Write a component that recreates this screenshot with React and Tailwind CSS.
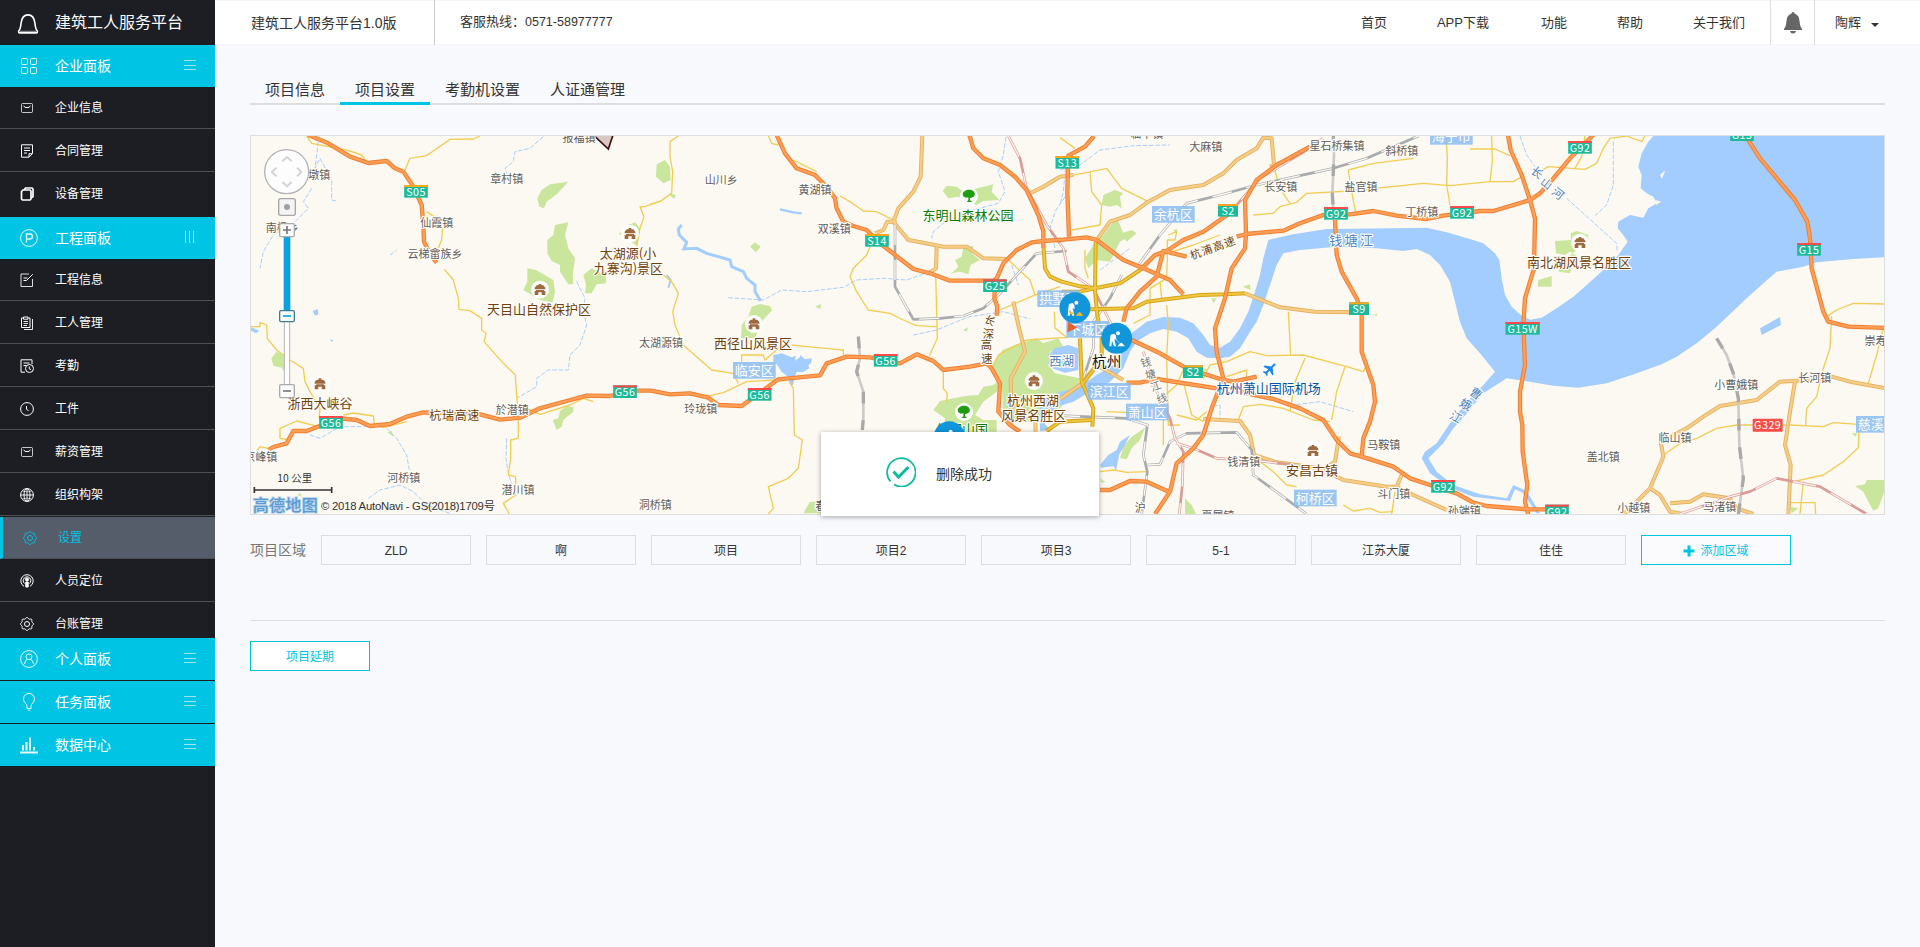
import React from "react";

const TILE = 1230;

const SHIELD = { G: "#fe4a4a", S: "#fda61c" };

/* Coordinates inside every tile are thirds of a pixel. */
const highways = [
  [0, "205,30 265,55 330,95 385,114 440,108 465,130 490,140 520,185 545,240 550,300 552,350 575,395 590,413"],
  [0, "85,975 100,966 140,955 160,918 200,918 300,880 350,885 390,903 450,897 500,875 550,862 720,868 780,884 840,878 900,850 980,828 1040,812 1110,813 1180,797 1232,797 1290,808 1350,805 1405,818 1435,840 1505,843 1550,810 1615,763 1740,751 1760,715 1820,695 1890,697 1980,715 2030,688 2080,708 2110,735 2190,725 2240,715 2255,730 2280,775 2275,860 2310,900 2340,920"],
  [1, "380,30 405,85 440,130 495,150 530,185 555,220 560,250 580,290 610,303 650,315 690,355 790,432 840,445 900,467 1030,467 1040,460 1060,415 1100,375 1145,352 1180,348 1240,344 1310,337 1340,345 1420,405 1480,430 1560,465 1600,508"],
  [1, "958,30 970,70 1000,100 1050,120 1095,155 1130,195 1165,270 1180,320 1180,370"],
  [1, "1035,480 1033,520 1042,545 1040,572"],
  [2, "102,33 75,65 25,92 22,200 27,335"],
  [2, "750,65 650,120 590,165 555,225 558,327 555,370 515,430 495,520 465,610 470,680 490,760 455,850 430,930 400,970 350,1015 330,1100 285,1167"],
  [2, "530,250 480,285 430,320 370,345 320,378 285,390 240,435"],
  [2, "380,395 310,378 290,455 240,500 200,550 190,590"],
  [2, "530,335 560,327 670,317 720,295 790,270 830,268 870,268 940,258 1010,272 1100,282 1150,272 1260,258 1300,258 1410,225 1440,205 1480,160 1530,100 1600,30"],
  [2, "825,285 830,390 845,440 890,520 905,560 905,680 940,780 945,830 930,890 910,940 905,995"],
  [2, "215,645 300,685 380,730 490,765 520,770 590,755"],
  [2, "200,773 240,773 290,762 470,790"],
  [2, "490,780 560,805 640,822 720,850 790,885 830,945 870,985 905,995 1000,1025 1050,1060 1110,1080 1190,1105 1240,1133 1280,1143 1400,1153 1490,1153"],
  [2, "120,1095 150,1095 210,1068 260,1070 330,1102"],
  [3, "114,30 122,75 155,150 180,225 195,280 192,430 165,520 160,600 165,720 150,800 150,860 157,900 158,980 172,1080 165,1130 175,1170"],
  [3, "825,30 870,100 975,225 1012,290 1020,340 1025,430 1060,560 1075,590 1135,605 1246,609"],
];

const mainRoads = [
  [1, "817,30 812,155 790,200 745,250 730,290 775,345 820,353 880,365 950,365 1000,400 1070,402"],
  [1, "740,290 712,290 700,315 675,325"],
  [1, "860,365 858,430 835,445"],
  [1, "1130,210 1180,185 1230,155 1270,150"],
  [1, "1090,530 1105,600 1125,680 1082,760 1085,900"],
  [1, "1155,870 1157,920"],
  [2, "110,345 150,290 210,270 265,230 330,195 430,180 490,145 530,105 590,70 610,38 635,40 642,120 630,125"],
  [2, "555,505 660,547 765,560 900,562"],
  [2, "430,882 540,888 570,930 582,990 650,1012 780,1030 850,1065 980,1085 1010,1085 1060,1110 1160,1155"],
  [2, "1025,1050 1010,1085"],
  [2, "837,935 825,1010 795,1030"],
  [2, "0,822 60,780 110,720 190,765"],
  [3, "600,935 650,910 700,875 750,843 860,825 930,770 980,767 1085,755 1140,770 1246,790"],
  [3, "975,770 960,860 945,960 962,1020 955,1170"],
  [3, "572,950 580,995 540,1090 500,1130 460,1170"],
  [3, "540,1090 570,1110 600,1160 640,1167"],
  [3, "600,1135 660,1130 700,1108 780,1120 800,1150 850,1167"],
];

const cityRoads = [
  [1, "1181,370 1185,430 1200,455 1235,470 1290,484 1335,490 1410,475 1470,435"],
  [1, "1190,918 1230,890 1325,885"],
  [2, "107,350 105,500 112,570 125,640 125,700"],
  [2, "60,640 65,770 100,850 97,905"],
  [2, "90,553 220,550 260,530 420,510 500,508 555,505"],
  [2, "5,500 60,500 105,490"],
  [2, "65,780 100,735"],
];

const lanes = [
  [0, "200,33 215,55 320,75 365,90 380,110"],
  [0, "495,135 510,100 560,92 580,78 630,43 700,42 720,33"],
  [0, "560,260 590,280 608,310 605,345 595,370"],
  [0, "613,433 640,465 655,520 657,553 690,557 725,580 725,615 738,625 732,650 750,670 790,715 826,750 830,815 835,860 835,940 812,945 812,1000 805,1050 827,1055 827,1110 790,1135 808,1167"],
  [0, "33,605 60,605 60,592 80,600 82,640 110,675 150,705 190,730 195,770 210,800 240,850 237,880"],
  [0, "150,945 120,940 120,910 170,888 235,905"],
  [0, "310,870 340,864 400,873 403,895 430,908 500,890"],
  [0, "50,978 60,965 85,970"],
  [0, "860,850 900,868 990,840 1030,820 1060,830"],
  [0, "1260,228 1215,245 1200,245 1212,275 1200,310 1190,365"],
  [1, "85,33 60,50 60,95 68,140 65,205 30,230 0,238"],
  [1, "355,33 365,55 385,60"],
  [1, "430,105 500,140"],
  [1, "570,213 600,230 640,258 680,260 730,285"],
  [1, "660,365 650,390 610,430 600,455 620,500 655,555 720,565 760,585 800,602 860,605"],
  [1, "857,450 862,640 838,692"],
  [1, "40,450 65,470 85,505 68,560 75,600 100,660 185,735 250,745 265,775"],
  [1, "425,660 470,665 560,673 580,675 580,690"],
  [1, "275,710 275,690 340,690 345,705 390,665"],
  [1, "125,810 180,812 220,803 290,770 375,765"],
  [1, "418,770 430,790 433,930 457,945 445,1030 415,1060 355,1085 370,1150 355,1167"],
  [1, "880,740 880,790 892,805 890,830"],
  [1, "1075,405 1140,465 1155,510"],
  [1, "1050,555 1150,512 1230,485"],
  [1, "1213,560 1215,610 1250,637 1130,645 1045,690 1030,720"],
  [2, "0,38 45,70"],
  [2, "35,152 140,130 185,190 265,230"],
  [2, "90,140 95,200 125,240 120,300 35,315"],
  [2, "325,330 350,320 345,345 322,345 322,400 320,460 270,490 270,570 220,595"],
  [2, "320,540 325,600 320,700 325,900 360,900"],
  [2, "300,470 305,520"],
  [2, "75,375 75,430 85,460"],
  [2, "640,120 660,190 690,235"],
  [2, "580,270 640,265 660,245 710,232 740,205 870,198 1090,175 1170,182 1290,170 1360,170 1385,155"],
  [2, "865,135 875,200 887,262"],
  [2, "865,135 940,115 1060,100"],
  [2, "1158,33 1162,100 1160,180 1170,240"],
  [2, "685,560 692,690"],
  [2, "430,760 450,720 500,710 570,680 620,692 730,690 860,725 910,740 920,720"],
  [2, "735,700 705,770 690,860"],
  [2, "855,725 830,800 815,885"],
  [2, "535,885 550,845 600,838 670,850 760,885 810,890"],
  [2, "310,960 310,815 350,780 370,735 440,735"],
  [2, "370,770 395,870 430,890"],
  [2, "500,755 560,735 560,760"],
  [2, "350,870 410,885 440,860"],
  [2, "120,1040 160,1035 200,1042 262,1040"],
  [2, "600,1010 640,1040 680,1080 710,1085"],
  [2, "850,1140 880,1158 930,1150 960,1162 1000,1160"],
  [2, "1005,1100 995,1167"],
  [2, "140,860 260,865 310,870"],
  [2, "290,395 400,360 480,330"],
  [3, "0,72 75,72 120,92"],
  [3, "65,33 67,110 60,170"],
  [3, "185,153 235,125 345,133 380,115 400,70 420,40 470,33 515,50 525,33"],
  [3, "315,130 335,95 345,33"],
  [3, "1070,575 1100,555 1150,535 1243,537"],
  [3, "1085,575 1080,670 1060,730 1050,770 1040,815 1010,850 1007,900"],
  [3, "1240,610 1220,690 1195,775"],
  [3, "580,990 630,955 680,940 740,910 800,900 960,900 1060,905 1090,893 1165,898"],
  [3, "1167,900 1165,968 1120,1010 1060,1050 960,1072"],
  [3, "955,1133 1035,1133 1037,1167"],
  [3, "1000,1070 990,1167"],
];

const rails = [
  [1, "735,300 735,485 790,583 870,580 940,573 1000,550 1045,510 1160,385 1250,378"],
  [2, "235,420 300,330 380,235 480,210 590,180 820,130 920,100 1075,33"],
  [2, "0,872 200,880 262,900 250,990 262,1040 245,1167"],
  [2, "262,1020 300,1018 330,950 380,925 530,922 575,975 580,1050 740,1167"],
  [2, "185,450 150,520 100,590 100,670 70,760"],
];

const lightRails = [
  [1, "625,635 630,700 620,740 640,800 640,880 637,915"],
  [2, "820,33 822,90 817,210 820,250"],
  [3, "740,640 770,690 790,745 805,820 808,960 820,1060 805,1170"],
];

const redRails = [
  [1, "1075,33 1110,100 1130,190 1190,300 1240,370 1255,440 1330,490 1385,600"],
  [2, "250,680 290,800 330,880 345,940 370,980 367,1080 358,1167"],
  [2, "350,955 400,970 470,1000 600,1008 700,1020"],
  [2, "790,40 740,75 600,160 530,240"],
  [3, "630,1167 780,1115 840,1100 920,1060 1050,1085 1190,1167"],
];

const streams = [
  [0, "235,50 225,130 240,100 275,165 275,225 290,228"],
  [0, "215,190 190,230 205,250 165,290 100,330 70,380 60,430"],
  [0, "910,35 870,70 825,80 820,110 795,130 800,145"],
  [0, "1010,470 1035,520 1030,560 1040,600 1020,660 990,690 985,735 925,735 890,760 890,785 830,820"],
  [0, "385,1120 420,1095 480,1080 520,1100 560,1140 630,1165"],
  [0, "440,910 470,940 500,990 508,1035"],
  [0, "210,930 240,940 300,905 390,905"],
  [0, "450,390 470,375"],
  [0, "800,940 798,1000 805,1045 822,1100"],
  [1, "235,518 340,525 395,495 470,500 580,487 620,465 700,460 770,465 840,440"],
  [1, "1068,36 1060,90 1045,140 1065,200 1045,235 950,260 880,295 850,320 845,340"],
  [1, "1255,200 1215,260 1200,310 1215,370"],
  [1, "790,630 860,615 920,590 960,575 1060,560 1140,582"],
  [1, "1085,420 1105,480"],
  [2, "0,135 60,120 120,75 220,62 330,60"],
  [2, "20,90 10,200 0,240"],
  [2, "620,810 700,840 780,830 880,860"],
  [2, "480,890 480,840 450,845"],
  [2, "120,435 210,370"],
  [3, "150,33 170,90 195,125"],
  [3, "290,220 440,355 442,380"],
  [3, "430,50 430,180 410,240 375,272"],
];

const greens = [
  [0, "985,170 930,178 905,195 892,220 898,245 912,250 920,230 950,208"],
  [0, "985,292 945,300 940,330 922,345 922,385 935,408 960,420 960,440 985,478 1000,478 998,450 1005,400 985,370 975,330"],
  [0, "862,430 888,435 940,465 945,500 938,532 900,525 850,495 862,470"],
  [0, "1055,430 1030,450 1038,478 1035,505 1055,505 1070,478 1098,475 1098,452 1075,440"],
  [0, "1185,292 1165,300 1165,318 1135,325 1150,335 1190,362 1200,310"],
  [0, "110,680 94,700 100,722 125,728 133,740 133,690"],
  [0, "980,843 960,858 955,880 938,885 950,915 965,905 970,885 1000,860 1000,846"],
  [0, "442,922 455,918 460,935"],
  [0, "1250,118 1275,105 1290,125 1292,165 1270,175 1248,155"],
  [0, "172,1110 180,1103 186,1115"],
  [1, "55,205 78,210 72,222"],
  [1, "300,365 315,352 332,365 318,382"],
  [1, "330,537 305,545 295,575 275,600 273,640 315,640 330,600 340,585 366,556 360,543"],
  [1, "878,198 890,182 920,185 940,200 1030,178 1025,200 1048,225 1000,228 980,240 925,215 895,220"],
  [1, "970,362 940,370 935,395 915,405 925,425 905,445 930,440 955,448 962,420 990,405 965,385"],
  [1, "495,545 512,537 512,552"],
  [1, "940,615 955,606 950,620"],
  [1, "1058,675 1100,658 1160,640 1180,655 1225,640 1240,665 1200,680 1195,720 1215,745 1290,760 1285,780 1230,850 1150,890 1090,890 1060,860 1055,770 1025,720"],
  [1, "850,855 870,828 950,812 985,810 1000,785 1030,780 1050,765 1040,800 1000,830 975,870 1000,885 1040,885 1040,920 880,920 885,880"],
  [1, "460,1165 480,1130 512,1130 512,1165"],
  [2, "165,195 130,210 125,240 150,245 170,240 185,250 180,215 190,205"],
  [2, "170,275 130,330 100,360 75,400 85,430 110,405 150,410 180,350 200,340 190,325 180,300"],
  [2, "185,325 215,315 230,325 200,350"],
  [2, "255,908 215,935 190,965 180,1000 200,1003 215,970 240,945"],
  [2, "375,1120 395,1140 408,1167 375,1167"],
  [2, "548,485 570,478 572,495"],
  [2, "455,520 470,520 460,535"],
  [2, "340,315 352,312 350,328"],
  [2, "120,1060 135,1070 125,1075"],
  [2, "940,570 952,565 950,573"],
  [3, "320,318 302,325 303,345 255,348 258,385 285,390 300,380 320,392 325,410 305,420 300,445 265,440 280,400 290,400 355,345 355,330"],
  [3, "205,465 245,453 245,485 203,485"],
  [3, "1155,1083 1185,1078 1190,1065 1243,1065 1243,1100 1225,1150 1210,1157 1195,1130 1180,1100"],
  [3, "1145,925 1162,925 1157,935"],
  [3, "960,1145 985,1150 965,1165"],
];

const shields = [
  [0, 528, 199, "S05"], [0, 1155, 800, "G56"], [0, 273, 892, "G56"],
  [1, 681, 346, "S14"], [1, 1035, 482, "G25"], [1, 707, 706, "G56"], [1, 329, 808, "G56"],
  [2, 22, 112, "S13"], [2, 504, 256, "S2"], [2, 828, 265, "G92"], [2, 1206, 262, "G92"],
  [2, 897, 551, "S9"], [2, 399, 740, "S2"], [2, 1149, 1084, "G92"],
  [3, 330, 67, "G92"], [3, 816, 29, "G15"], [3, 1017, 373, "G15"], [3, 158, 610, "G15W"], [3, 261, 1158, "G92"],
];

const towns = [
  [0, 221, 151, "敦墩镇"], [0, 1017, 38, "报福镇"], [0, 800, 162, "章村镇"], [0, 590, 295, "仙霞镇"],
  [0, 585, 387, "云梯畲族乡"], [0, 127, 310, "南极乡"], [0, 1263, 655, "太湖源镇"], [0, 817, 856, "於潜镇"],
  [0, 62, 997, "京峰镇"], [0, 491, 1060, "河桥镇"], [0, 834, 1095, "潜川镇"], [0, 1246, 1140, "洞桥镇"],
  [1, 214, 165, "山川乡"], [1, 495, 195, "黄湖镇"], [1, 553, 313, "双溪镇"], [1, 152, 853, "玲珑镇"],
  [1, 545, 1142, "春建乡"],
  [2, 260, 28, "临平镇"], [2, 437, 67, "大麻镇"], [2, 831, 64, "星石桥集镇"], [2, 1025, 79, "斜桥镇"],
  [2, 662, 185, "长安镇"], [2, 903, 187, "盐官镇"], [2, 1085, 262, "丁桥镇"], [2, 971, 961, "马鞍镇"],
  [2, 551, 1012, "钱清镇"], [2, 1001, 1108, "斗门镇"], [2, 1213, 1158, "孙端镇"], [2, 474, 1174, "夏履镇"], [2, 241, 1148, "沪"],
  [3, 1233, 649, "崇寿镇"], [3, 1034, 760, "长河镇"], [3, 799, 780, "小曹娥镇"], [3, 615, 940, "临山镇"],
  [3, 400, 995, "盖北镇"], [3, 491, 1148, "小越镇"], [3, 749, 1146, "马渚镇"],
];

const sights = [
  [0, 1164, 386, "太湖源(小", "#70400f"], [0, 1165, 431, "九寨沟)景区", "#70400f"],
  [0, 897, 553, "天目山自然保护区", "#70400f"], [0, 240, 835, "浙西大峡谷", "#70400f"],
  [1, 309, 655, "西径山风景区", "#70400f"], [1, 954, 272, "东明山森林公园", "#0c7a00"],
  [1, 1149, 826, "杭州西湖", "#70400f"], [1, 1151, 871, "风景名胜区", "#70400f"],
  [1, 936, 914, "午潮山国", "#0c7a00"],
  [2, 626, 790, "杭州萧山国际机场", "#0055a8"], [2, 756, 1036, "安昌古镇", "#70400f"],
  [3, 327, 412, "南北湖风景名胜区", "#70400f"],
];

const districts = [
  [1, 313, 736, "临安区"], [1, 1226, 521, "拱墅区"], [2, 340, 268, "余杭区"], [2, 83, 613, "下城区"],
  [2, 148, 799, "滨江区"], [2, 262, 861, "萧山区"], [2, 766, 1119, "柯桥区"], [2, 1174, 34, "海宁市"],
  [3, 1222, 898, "慈溪市"],
];

const pagodas = [[0, 1170, 326], [0, 900, 494], [0, 240, 777], [1, 312, 597], [1, 1152, 768], [2, 759, 977], [3, 330, 353]];
const trees = [[1, 957, 213], [1, 942, 861]];

const at = ([tile]) => `translate(${tile * TILE} 0)`;

function Lines({ rows, className, dash }) {
  return rows.map((row, i) => (
    <polyline key={i} transform={at(row)} points={row[1]} className={className} strokeDasharray={dash} strokeLinejoin="round" />
  ));
}

function MapText({ x, y, size, fill, children, rotate = 0, weight, spacing, stroke = "#fffdf8" }) {
  return (
    <text
      transform={`translate(${x} ${y}) rotate(${rotate})`}
      dy="0.37em"
      textAnchor="middle"
      fontSize={size}
      fill={fill}
      stroke={stroke}
      strokeWidth="7"
      strokeLinejoin="round"
      paintOrder="stroke"
      fontWeight={weight}
      letterSpacing={spacing}
    >
      {children}
    </text>
  );
}

function Worker({ x, y, mound = "#fff", facing = 0 }) {
  return (
    <g transform={`translate(${x} ${y})`}>
      <circle r="46.5" fill="#1296db" />
      <circle cx="4" cy="-15" r="6" fill="#fff" opacity=".95" />
      <path d="M-18-11l11-3 5 6 1 12-6-2 5 22h-6l-6-17-2 17h-6l2-22z" fill="#fff" />
      <path d="M2 24l8-9 5-2 10 11z" fill={mound} />
      {facing ? <path d="M-22 6l22 14h-14z" fill={mound} /> : <path d="M-2 2L9 15" stroke="#bfe3f7" strokeWidth="2" />}
    </g>
  );
}

function MapCanvas() {
  return (
    <svg viewBox="33 33 4899 1134" width="1633" height="378" className="block font-['Noto_Sans_CJK_SC',sans-serif]">
      <rect x="33" y="33" width="4899" height="1134" fill="#fcf9f2" />
      {greens.map((g, i) => (
        <polygon key={i} transform={at(g)} points={g[1]} fill="#c9e69c" />
      ))}
      <g fill="#a3ccff">
        <path
          transform="translate(2460 0)"
          d="M-60 830L0 800 50 790 110 750 160 720 190 660 215 625 260 590 310 576 360 578 400 595 430 630 450 660 480 668 510 650 540 610 565 560 585 500 600 450 610 400 625 345 700 328 800 312 1000 310 1100 308 1160 322 1230 342 1270 355 1305 385 1318 405 1325 460 1335 510 1355 545 1385 572 1410 584 1445 578 1490 550 1540 515 1580 480 1630 435 1675 390 1703 350 1690 330 1673 310 1675 290 1710 270 1750 278 1765 250 1790 235 1780 215 1760 205 1742 190 1745 150 1735 125 1745 85 1765 50 1780 33 2480 33 2480 396 2380 402 2270 412 2230 425 2150 440 2110 475 2060 520 1970 605 1910 655 1850 695 1805 718 1730 745 1640 775 1555 788 1480 782 1395 768 1340 760 1270 805 1225 860 1180 910 1150 955 1105 1000 1130 1040 1180 1080 1260 1108 1340 1120 1360 1080 1400 1098 1440 1165 1430 1165 1390 1105 1365 1092 1350 1128 1240 1115 1170 1088 1110 1045 1085 1000 1095 980 1130 955 1170 895 1225 825 1270 780 1305 740 1260 685 1220 640 1200 590 1185 530 1170 470 1140 420 1110 390 1070 372 1030 378 950 370 830 365 720 375 670 385 650 420 630 480 610 540 590 590 570 620 540 670 510 695 480 700 440 698 410 680 385 640 350 620 310 612 270 625 230 650 210 680 190 730 150 770 90 800 40 830 0 842-60 880-30 915-60 918-60 860z"
        />
        <path transform="translate(1230 0)" d="M370 690l25-5 30 12 12-5-2 15 15-10 2-8 12 14 22-3-3 15-8 5 3 10-20 12-18-2-5 14-6 26-10-2-4-22-20-16-15-22-10-8zM1200 685l15-15 40-10 30 10v65l-40 8-35-12-15-15z" />
        <path transform="translate(2460 0)" d="M210 930l-30 20-10 25-25 15-25 30 5 8 35-5 8 15 10-50 15-25z" />
        <path transform="translate(3690 0)" d="M870 610l60-34 3 24-58 30z" />
        <path d="M218 558l15-6 2 16-10 4zM270 642l10 4-4 6zM33 607l25 10-10 8-15-8z" />
      </g>
      <path transform="translate(3690 0)" d="M570 150l16-14-10 26zM556 225l18 5-16 10z" fill="#fcf9f2" />
      <polyline transform="translate(1230 0)" points="95,300 85,312 88,330 110,352 102,372 140,370 170,385 240,405 245,425 280,440 290,460 315,480 315,500 332,528" fill="none" stroke="#a3ccff" strokeWidth="9" />
      <polyline transform="translate(1230 0)" points="390,253 430,262 455,265" fill="none" stroke="#a3ccff" strokeWidth="7" />
      <polyline transform="translate(1230 0)" points="50,450 62,465 55,488" fill="none" stroke="#a3ccff" strokeWidth="6" />
      <Lines rows={streams} className="fill-none stroke-[#a9cffb] stroke-3" dash="14 5" />
      <Lines rows={lanes} className="fill-none stroke-[#f1cd55] stroke-4" />
      <Lines rows={mainRoads} className="fill-none stroke-[#e3b05c] stroke-12" />
      <Lines rows={mainRoads} className="fill-none stroke-[#f6cd88] stroke-7" />
      <Lines rows={rails} className="fill-none stroke-[#a7abad] stroke-8" />
      <Lines rows={rails} className="fill-none stroke-[#fcf9f2] stroke-4" dash="60 45" />
      <Lines rows={lightRails} className="fill-none stroke-[#cbcbca] stroke-8" />
      <Lines rows={lightRails} className="fill-none stroke-[#a9a9a9] stroke-10" dash="35 50" />
      <Lines rows={redRails} className="fill-none stroke-[#d99c98] stroke-8" />
      <Lines rows={redRails} className="fill-none stroke-[#fcf3ee] stroke-4" dash="70 50" />
      <Lines rows={cityRoads} className="fill-none stroke-[#d3a31c] stroke-12" />
      <Lines rows={cityRoads} className="fill-none stroke-[#f0c63d] stroke-6" />
      <Lines rows={highways} className="fill-none stroke-[#f07f30] stroke-13" />
      <Lines rows={highways} className="fill-none stroke-[#ff9f57] stroke-7" />
      <polygon points="1060,30 1105,72 1119,30" fill="#d8c8c4" stroke="#430d0d" strokeWidth="5" />

      {[...pagodas, ...trees].map(([t, x, y], i) => (
        <circle key={i} cx={t * TILE + x} cy={y} r="27" fill="#fff" />
      ))}
      {pagodas.map(([t, x, y], i) => (
        <path key={i} transform={`translate(${t * TILE + x} ${y})`} d="M-4-17h8v4h6l6 7v5h-32v-5l6-7h6zM-12 1h24v3h4v12H5V8H-5v8h-11V4h4z" fill="#a06a41" />
      ))}
      {trees.map(([t, x, y], i) => (
        <path key={i} transform={`translate(${t * TILE + x} ${y})`} d="M-12-16l8-3h10l8 5 4 7-2 8-8 4-5 1v7l7 5h-17l5-5V4l-8 1-8-5-1-9z" fill="#1f9d12" />
      ))}
      <circle cx="3090" cy="732" r="27" fill="#fff" />
      <path transform="translate(3090 732) rotate(45)" d="M-3-20q3-6 6 0v12L19 4v5L3 4v10l6 5v3L0 20l-9 2v-3l6-5V4l-16 5V4L-3-8z" fill="#1a86e8" />

      {districts.map(([t, x, y, s], i) => (
        <g key={i} transform={`translate(${t * TILE + x} ${y})`}>
          <rect x="-64" y="-25" width="128" height="50" fill="#8dbdf2" opacity=".88" />
          <text textAnchor="middle" dy="0.37em" fontSize="39" fill="#fff">{s}</text>
        </g>
      ))}
      {towns.map(([t, x, y, s], i) => (
        <MapText key={i} x={t * TILE + x} y={y} size="33" fill="#5f5c5a">{s}</MapText>
      ))}
      {sights.map(([t, x, y, s, c], i) => (
        <MapText key={i} x={t * TILE + x} y={y} size="39" fill={c}>{s}</MapText>
      ))}
      <MapText x={644} y={871} size="36" fill="#6b3c05" spacing="2">杭瑞高速</MapText>
      <MapText x={2250} y={586} size="32" fill="#6b3c05" rotate={25}>长</MapText>
      <MapText x={2245} y={626} size="34" fill="#6b3c05">深</MapText>
      <MapText x={2239} y={660} size="34" fill="#6b3c05">高</MapText>
      <MapText x={2241} y={700} size="34" fill="#6b3c05">速</MapText>
      <MapText x={2919} y={368} size="33" fill="#6b3c05" rotate={-20} spacing="3">杭浦高速</MapText>
      <MapText x={3337} y={345} size="39" fill="#4a82c4" spacing="7">钱塘江</MapText>
      <MapText x={2465} y={709} size="37" fill="#4a82c4">西湖</MapText>
      <MapText x={3892} y={142} size="35" fill="#4a82c4" rotate={38}>长</MapText>
      <MapText x={3920} y={175} size="33" fill="#4a82c4" rotate={38}>山</MapText>
      <MapText x={3954} y={205} size="35" fill="#4a82c4" rotate={38}>河</MapText>
      <MapText x={3708} y={806} size="35" fill="#4a82c4" rotate={35}>曹</MapText>
      <MapText x={3678} y={838} size="35" fill="#4a82c4" rotate={30}>娥</MapText>
      <MapText x={3648} y={876} size="35" fill="#4a82c4" rotate={30}>江</MapText>
      <MapText x={2718} y={712} size="32" fill="#777" rotate={-12}>钱</MapText>
      <MapText x={2731} y={748} size="32" fill="#777" rotate={-12}>塘</MapText>
      <MapText x={2747} y={783} size="32" fill="#777" rotate={-20}>江</MapText>
      <MapText x={2766} y={820} size="32" fill="#777" rotate={-20}>线</MapText>

      {shields.map(([t, x, y, s], i) => {
        const w = s.length === 2 ? 60 : s.length === 3 ? 71 : 103;
        return (
          <g key={i} transform={`translate(${t * TILE + x} ${y})`}>
            <rect x={-w / 2} y="-19" width={w} height="38" fill="#1dba9a" />
            <rect x={-w / 2} y="-19" width={w} height="6" fill={SHIELD[s[0]]} />
            <text textAnchor="middle" y="14" fontSize="32" fill="#fff" letterSpacing="1.5">{s}</text>
          </g>
        );
      })}
      <g transform="translate(4583 901)">
        <rect x="-45" y="-20" width="90" height="39" rx="3" fill="#f94d47" />
        <text textAnchor="middle" y="11" fontSize="32" fill="#fff" letterSpacing="1.5">G329</text>
      </g>
      <polygon points="2484,590 2512,608 2482,622" fill="#e8602c" />
      <MapText x={2600} y={710} size="44" fill="#111">杭州</MapText>
      <Worker x={2505} y={548} mound="#f6b92e" facing={1} />
      <Worker x={2630} y={640} />
      <Worker x={2128} y={935} />

      <g>
        <circle cx="140" cy="140" r="66" fill="#fdfdfd" stroke="#b3b3b3" strokeWidth="4" />
        <path d="M127 109l14-13 14 13M127 171l14 13 14-13M109 128l-13 13 13 13M171 128l13 13-13 13" fill="none" stroke="#d4d4d4" strokeWidth="6" />
        <rect x="116" y="221" width="50" height="50" rx="6" fill="#f4f4f4" stroke="#a6a6a6" strokeWidth="4" />
        <circle cx="141" cy="246" r="9" fill="#a0a0a0" />
        <rect x="133" y="580" width="16" height="200" fill="#fff" stroke="#b5b5b5" strokeWidth="3" />
        <rect x="131" y="330" width="20" height="235" fill="#0aa0e2" />
        <rect x="119" y="296" width="44" height="39" rx="4" fill="#fbfbfb" stroke="#aaa" strokeWidth="4" />
        <path d="M129 315h24M141 303v24" stroke="#777" strokeWidth="5" />
        <rect x="119" y="557" width="44" height="33" rx="4" fill="#fff" stroke="#3a7d94" strokeWidth="4" />
        <path d="M129 573h24" stroke="#0aa0e2" strokeWidth="5" />
        <rect x="119" y="779" width="44" height="39" rx="4" fill="#fbfbfb" stroke="#aaa" strokeWidth="4" />
        <path d="M129 798h24" stroke="#777" strokeWidth="5" />
      </g>
      <text x="112" y="1071" fontSize="31" fill="#333" textLength="104">10 公里</text>
      <path d="M43 1086v18M275 1086v18M43 1095h232" stroke="#333" strokeWidth="5" fill="none" />
      <text x="38" y="1157" fontSize="48" fontWeight="500" fill="#5c9bd1" stroke="#b9d5ee" strokeWidth="5" paintOrder="stroke" textLength="195">高德地图</text>
      <text x="243" y="1155" fontSize="34" fill="#333" textLength="522" className="font-['Liberation_Sans','Noto_Sans_CJK_SC',sans-serif]">© 2018 AutoNavi - GS(2018)1709号</text>
    </svg>
  );
}

/* Eight-lobed gear outline around (7, 7). */
const gearOutline = Array.from({ length: 64 }, (_, i) => {
  const a = (i / 64) * Math.PI * 2;
  const r = 5.9 + 0.65 * Math.cos(8 * a);
  return `${(7 + r * Math.cos(a)).toFixed(2)},${(7 + r * Math.sin(a)).toFixed(2)}`;
}).join(" ");

const iconArt = {
  mail: <><rect x="1.5" y="2.5" width="11" height="9" rx="1" opacity=".75" /><path d="M3.500 5l2.500 1.800L7 6.200l1 .6L10.500 5" /></>,
  contract: <><path d="M12.500 9.500V.8H1.500v12.400H9l3.500-3.700zM9 13V9.700h3.400" /><path d="M4 4h6M4 6.500h6M4 9h3" /></>,
  device: <><path d="M4 3l1.500-2h6.500l1 1v7.500L11 11M3 3h7l1 1v8l-1 1H2.500l-1-1V4.500z" strokeWidth="1.700" /></>,
  edit: <><path d="M9 1H1v12.500h11.500V6" opacity=".85" /><path d="M3.500 5h4M3.500 7.500h3L12.800 1.200" /></>,
  clipboard: <><path d="M3 2H1.500v9.500H10V2H8.500M3.500 1h4.500v2.200H3.500z" /><path d="M3.500 5.500H8M3.500 7.500H8M3.500 9.500H7M12.500 3v10.500H4" strokeWidth=".9" /></>,
  attendance: <><path d="M12 5V.8H1v12.400h4" /><path d="M3.500 4h6M3.500 6.500h2.500" /><circle cx="9.500" cy="9.500" r="4" /><path d="M9.300 7.500v2.300l1.700.8" /></>,
  clock: <><circle cx="7" cy="7" r="6.400" /><path d="M6.500 4v3l2 2" /></>,
  globe: <><circle cx="7" cy="7" r="6.400" /><ellipse cx="7" cy="7" rx="3" ry="6.400" /><path d="M.6 7h12.800M7 .6v12.800" strokeWidth=".9" /><path d="M2.500 3.200q4.500 1.400 9 0M2.500 10.800q4.500-1.400 9 0" strokeWidth=".6" /></>,
  gear: <><polygon points={gearOutline} /><circle cx="7" cy="7" r="2.500" /></>,
  locate: <><path d="M4 12.300A6.200 6.200 0 1 1 10 12.300M4.500 9.500a3.800 3.800 0 1 1 5 0" /><circle cx="7" cy="5.500" r="1.600" fill="currentColor" /><path d="M5.800 8h2.400v5H5.800z" fill="currentColor" /></>,
};

function ItemIcon({ name }) {
  return (
    <svg width="14" height="14" viewBox="0 0 14 14" fill="none" stroke="currentColor" className="shrink-0">
      {iconArt[name]}
    </svg>
  );
}

const panelArt = {
  grid: <><rect x="1.500" y="1.500" width="6" height="6" rx="1" /><rect x="10.500" y="1.500" width="6" height="6" rx="1" /><rect x="1.500" y="10.500" width="6" height="6" rx="1" /><rect x="10.500" y="10.500" width="6" height="6" rx="1" /></>,
  project: <><circle cx="9" cy="9" r="8.400" /><path d="M6.500 13.500V5h3.700q2.300.2 2.300 2.500t-2.300 2.500H6.500" strokeWidth="1.300" /></>,
  person: <><circle cx="9" cy="9" r="8.400" /><circle cx="9" cy="6.800" r="2.900" /><path d="M4.500 14q.3-4 3-4.500M13.500 14q-.3-4-3-4.500" /></>,
  bulb: <path d="M7 13.500q0-1.800-2-3.800a5.500 5.500 0 1 1 8 0q-2 2-2 3.800M7 13.500v2h4v-2M8 17.300h2" />,
  chart: <path d="M0 16.500h18M3 14.500V9M6.500 14.500V6M10 14.500V1.500M14 14.500V11" strokeWidth="2" />,
};

function PanelTitle({ icon, label, open }) {
  return (
    <div className="flex h-[42px] shrink-0 items-center bg-[#00c4e4] pr-[19px] pl-5 text-white">
      <svg width="18" height="18" viewBox="0 0 18 18" fill="none" stroke="currentColor" className="opacity-90">
        {panelArt[icon]}
      </svg>
      <span className="ml-[17px] text-sm">{label}</span>
      <svg width="12" height="12" viewBox="0 0 12 12" stroke="#fff" className="mb-0.5 ml-auto opacity-60">
        {open ? <path d="M1.500 0v12M5.500 0v12M9.500 0v12" /> : <path d="M0 1.500h12M0 6.500h12M0 10.500h12" />}
      </svg>
    </div>
  );
}

function MenuItem({ icon, label, active, last }) {
  const look = active
    ? "border-l-3 border-l-[#00c4e4] bg-[#545d69] text-[#00c4e4]"
    : "text-white";
  const line = last ? "border-b-transparent" : "border-b-[#4e4f52]";
  return (
    <li className={`mb-px flex h-[42px] shrink-0 items-center border-b pl-5 ${look} ${line}`}>
      <ItemIcon name={icon} />
      <span className="mt-px ml-[21px] text-xs">{label}</span>
    </li>
  );
}

const projectItems = [
  ["edit", "工程信息"], ["clipboard", "工人管理"], ["attendance", "考勤"], ["clock", "工件"], ["mail", "薪资管理"],
  ["globe", "组织构架"], ["gear", "设置"], ["locate", "人员定位"], ["gear", "台账管理"],
];

function Sidebar() {
  return (
    <aside className="flex w-[215px] shrink-0 flex-col bg-[#1c1e24]">
      <div className="flex h-[45px] shrink-0 items-center pl-[18px] text-white">
        <svg width="20" height="20" viewBox="0 0 20 20" fill="none" stroke="currentColor" strokeWidth="1.600" className="mt-0.5 overflow-visible">
          <path d="M10 .9C6 .9 3.600 4.300 3 9.500 2.700 13 2.300 15.300 .7 17q-.4 1.900 1 1.900h16.600q1.400 0 1-1.900C17.700 15.300 17.300 13 17 9.500 16.400 4.300 14 .9 10 .9z" />
          <path d="M2 17.300h16" strokeWidth="1" opacity=".6" />
        </svg>
        <span className="ml-[17px] text-base leading-none">建筑工人服务平台</span>
      </div>
      <PanelTitle icon="grid" label="企业面板" />
      <ul className="flex flex-col pb-px">
        <MenuItem icon="mail" label="企业信息" />
        <MenuItem icon="contract" label="合同管理" />
        <MenuItem icon="device" label="设备管理" last />
      </ul>
      <PanelTitle icon="project" label="工程面板" open />
      <ul className="flex h-[379px] shrink-0 flex-col overflow-hidden">
        {projectItems.map(([icon, label]) => (
          <MenuItem key={label} icon={icon} label={label} active={label === "设置"} />
        ))}
      </ul>
      <div className="flex flex-col gap-px">
        <PanelTitle icon="person" label="个人面板" />
        <PanelTitle icon="bulb" label="任务面板" />
        <PanelTitle icon="chart" label="数据中心" />
      </div>
    </aside>
  );
}

function TopBar() {
  return (
    <header className="flex h-[45px] shrink-0 items-stretch border-y border-[#f5f5f8] bg-white text-[13px] text-[#333]">
      <div className="-my-px flex w-[220px] items-center border-r border-[#ccc] pl-[36px] text-sm">建筑工人服务平台1.0版</div>
      <div className="flex items-center pb-0.5 pl-[25px]">
        客服热线：<span className="mt-0.5 text-[12.5px]">0571-58977777</span>
      </div>
      <nav className="mr-[25px] ml-auto flex items-center gap-[50px]">
        {["首页", "APP下载", "功能", "帮助", "关于我们"].map((t) => (
          <span key={t} className={t === "APP下载" ? "w-[54px] whitespace-nowrap" : ""}>{t}</span>
        ))}
      </nav>
      <div className="-my-px flex w-[45px] items-center justify-center border-x border-[#ddd]">
        <svg width="18" height="22" viewBox="0 0 18 22" fill="#666">
          <path d="M9 0q1.500 0 1.700 1.700Q15.300 3 15.500 9q.1 5 2.500 8v1H0v-1q2.400-3 2.500-8Q2.700 3 7.300 1.700 7.500 0 9 0zM6 19h6q-.5 2.500-3 2.500T6 19z" />
        </svg>
      </div>
      <div className="flex w-[105px] items-center pl-5">
        陶辉
        <span className="mt-1 ml-2.5 border-x-4 border-t-4 border-x-transparent border-t-[#333]" />
      </div>
    </header>
  );
}

function Tabs() {
  return (
    <div className="flex h-[29px] border-b-2 border-[#ddd] text-[15px] leading-7 text-[#333]">
      {["项目信息", "项目设置", "考勤机设置", "人证通管理"].map((t) => (
        <div key={t} className={`h-[29px] px-[15px] ${t === "项目设置" ? "border-b-3 border-[#00c4e4]" : ""}`}>
          {t}
        </div>
      ))}
    </div>
  );
}

const areas = ["ZLD", "啊", "项目", "项目2", "项目3", "5-1", "江苏大厦", "佳佳"];

export default function App() {
  return (
    <div className="flex h-[947px] w-[1920px] overflow-hidden bg-[#f8f9fd] font-['Liberation_Sans','Noto_Sans_CJK_SC',sans-serif]">
      <Sidebar />
      <div className="flex flex-1 flex-col">
        <TopBar />
        <main className="flex flex-col pt-[31px] pr-[35px] pl-[35px]">
          <Tabs />
          <div className="mt-[30px] h-[380px] overflow-hidden border border-[#ddd]">
            <MapCanvas />
          </div>
          <div className="mt-5 flex items-center gap-[15px] text-xs text-[#333]">
            <span className="w-14 text-sm text-[#777]">项目区域</span>
            {areas.map((a) => (
              <div key={a} className="flex h-[30px] w-[150px] items-center justify-center border border-[#ddd] pt-px">{a}</div>
            ))}
            <div className="flex h-[30px] w-[150px] items-center justify-center gap-[5px] border border-[#00c4e4] bg-white/40 pt-px text-[#00c4e4]">
              <svg width="12" height="12" viewBox="0 0 12 12" fill="currentColor">
                <path d="M4.500.5h3v4h4v3h-4v4h-3v-4h-4v-3h4z" />
              </svg>
              添加区域
            </div>
          </div>
          <div className="mt-[55px] border-t border-[#ddd] pt-5">
            <button className="h-[30px] w-[120px] border border-[#00c4e4] bg-white pt-px text-xs text-[#00c4e4]">项目延期</button>
          </div>
        </main>
      </div>
      <div className="absolute top-[432px] left-[821px] flex h-[84px] w-[278px] items-center bg-white pl-[65px] shadow-[0_1px_5px_rgba(0,0,0,0.35)]">
        <svg width="30" height="30" viewBox="0 0 30 30" fill="none" stroke="#0fba9c" className="mb-1">
          <path d="M4.500 24.500A14.200 14.200 0 1 1 8 27.500" strokeWidth="1.700" />
          <path d="M7.500 14.500l5 5.500 10-10" strokeWidth="3" />
        </svg>
        <span className="ml-5 text-sm text-[#333]">删除成功</span>
      </div>
    </div>
  );
}
